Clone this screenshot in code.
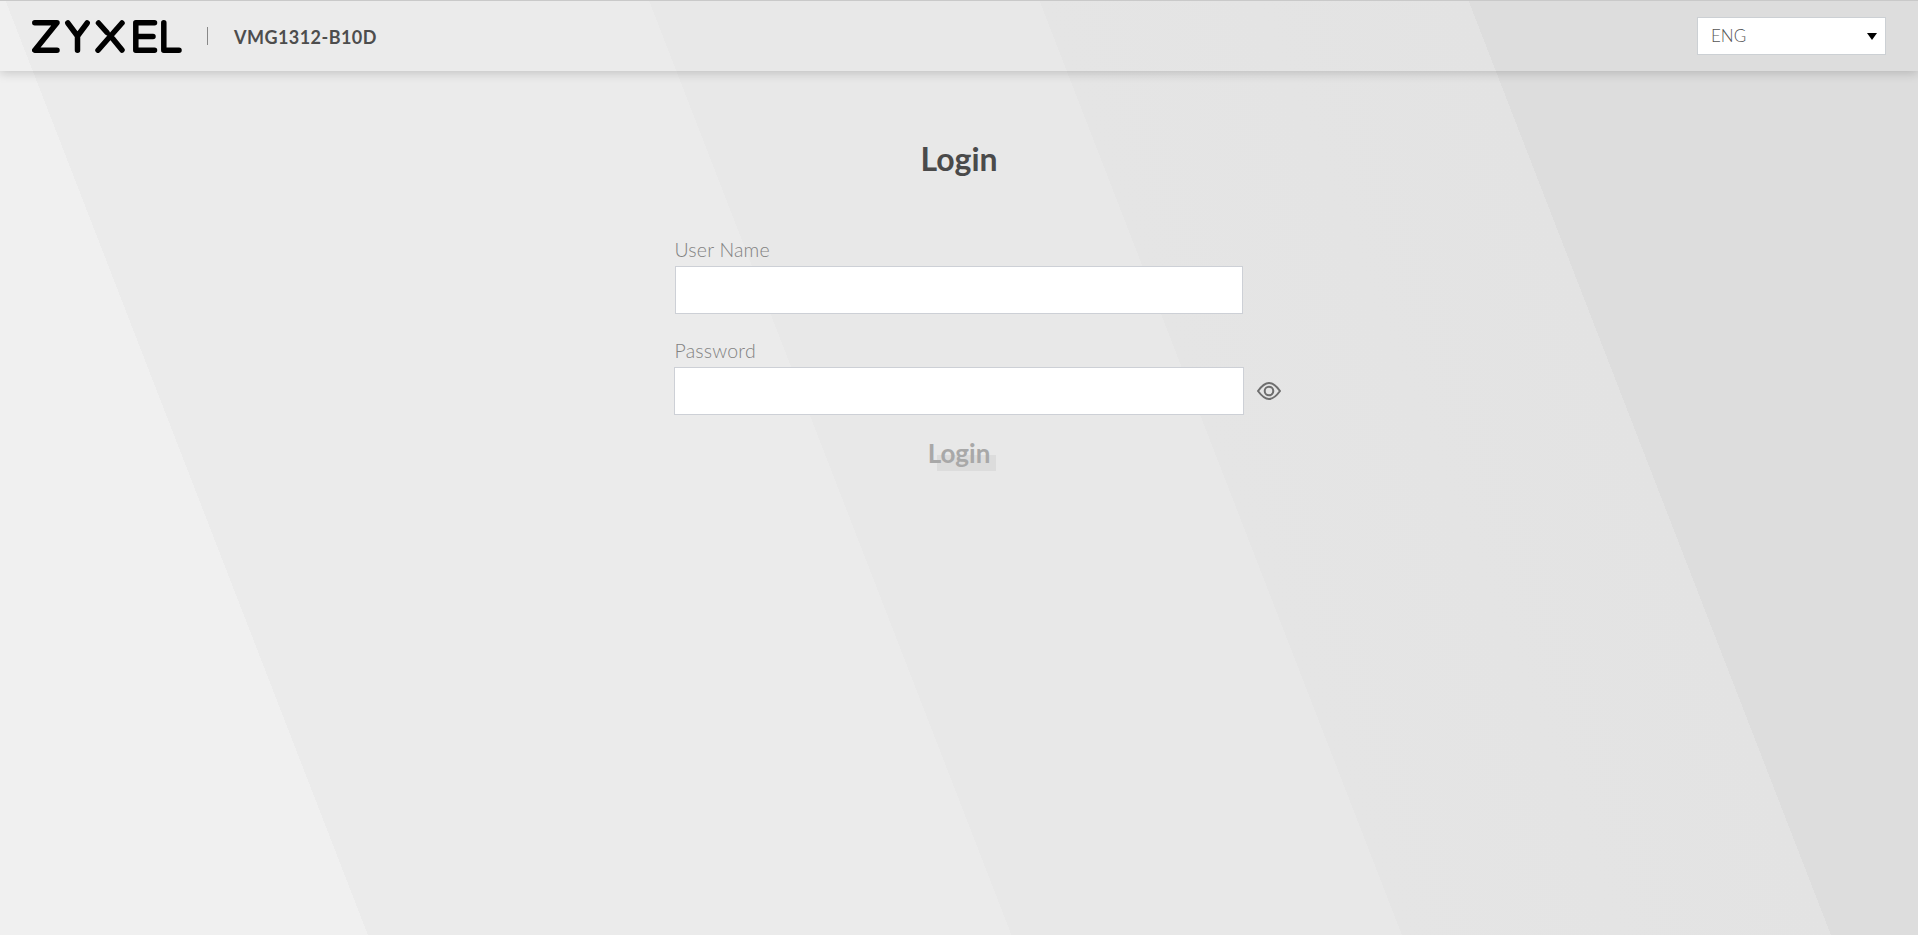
<div class="page">
  <header class="top">
    <div class="brand">
      <svg class="logo" viewBox="0 0 150 33" width="150" height="33" aria-label="Zyxel logo">
        <g fill="none" stroke="#000" stroke-width="5.500" stroke-linecap="round" stroke-linejoin="round">
          <path d="M2.800 2.800H25L2.800 30.200H25" />
          <path d="M35.800 3L45.500 16L55.200 3M45.500 16V30.200" />
          <path d="M66.500 3L75 12.500M90 3L66 30.200M81 19L90 30" />
          <path d="M122.500 2.800H103.800V30.200H122.500M103.800 16.500H121" />
          <path d="M131.800 2.800V30.200H147" />
        </g>
      </svg>
      <span class="sep"></span>
      <span class="model">VMG1312-B10D</span>
    </div>
    <div class="lang">
      <span>ENG</span>
      <i class="caret"></i>
    </div>
  </header>

  <main class="login">
    <h1>Login</h1>
    <form class="form">
      <label class="field">
        <span>User Name</span>
        <input type="text" />
      </label>
      <label class="field pw">
        <span>Password</span>
        <div class="pwrow">
          <input type="password" />
          <svg class="eye" viewBox="0 0 24 18" width="24" height="18">
            <path d="M1 9C5 3.500 8.500 1 12 1s7 2.500 11 8c-4 5.500-7.500 8-11 8S5 14.500 1 9Z" fill="none" stroke="#6e6e6e" stroke-width="2" />
            <circle cx="12" cy="9" r="4.300" fill="none" stroke="#6e6e6e" stroke-width="2" />
          </svg>
        </div>
      </label>
      <div class="btnwrap"><button type="button" class="btn">Login</button></div>
    </form>
  </main>
</div>

<style>
  :global(body) {
    margin: 0;
    background: #e8e8e8;
  }
  .page {
    height: 935px;
    overflow: hidden;
    font-family: "Lato", "Open Sans", sans-serif;
    background: linear-gradient(
      68.8deg,
      #f0f0f0 0,
      #f0f0f0 343px,
      #ebebeb 343px,
      #ebebeb 943px,
      #e8e8e8 943px,
      #e8e8e8 1307px,
      #e5e5e5 1307px,
      #e3e3e3 1707px,
      #dddddd 1707px,
      #dddddd 100%
    );
  }
  .top {
    box-sizing: border-box;
    height: 71px;
    border-top: 1px solid #c9c9c9;
    display: flex;
    align-items: center;
    justify-content: space-between;
    padding: 0 32px;
    box-shadow: 0 2px 10px rgba(0,0,0,0.18);
  }
  .brand {
    display: flex;
    align-items: center;
  }
  .logo {
    margin-top: 1px;
  }
  .sep {
    width: 1px;
    height: 18px;
    background: #888;
    margin-left: 25px;
  }
  .model {
    margin-left: 26px;
    margin-top: 2px;
    font-size: 18px;
    font-weight: 700;
    color: #4d4d4d;
    letter-spacing: 0.45px;
  }
  .lang {
    box-sizing: border-box;
    width: 189px;
    height: 38px;
    background: #fff;
    border: 1px solid #ccd0d4;
    display: flex;
    align-items: center;
    justify-content: space-between;
    padding: 0 8px 0 13px;
    font-size: 17px;
    font-weight: 300;
    color: #555;
  }
  .lang span {
    margin-top: -1px;
  }
  .caret {
    width: 0;
    height: 0;
    margin-top: 1px;
    border-left: 5px solid transparent;
    border-right: 5px solid transparent;
    border-top: 7px solid #000;
  }
  .login {
    display: flex;
    flex-direction: column;
    align-items: center;
  }
  h1 {
    margin: 0;
    padding-top: 69px;
    font-size: 32px;
    line-height: 38px;
    font-weight: 700;
    color: #4a4a4a;
    text-align: center;
  }
  .form {
    width: 569px;
    margin-top: 60px;
  }
  .field {
    display: block;
  }
  .field span {
    display: block;
    font-size: 19.500px;
    line-height: 24px;
    margin-bottom: 4px;
    font-weight: 300;
    letter-spacing: 0.2px;
    color: #828282;
  }
  input {
    display: block;
    box-sizing: border-box;
    width: 568px;
    height: 48px;
    background: #fff;
    border: 1px solid #cdd0d6;
    outline: none;
    padding: 0 10px;
  }
  .pw {
    margin-top: 25px;
  }
  .pwrow {
    position: relative;
  }
  .pwrow input {
    width: 570px;
    margin-left: -1px;
  }
  .eye {
    position: absolute;
    left: 582px;
    top: 15px;
  }
  .btnwrap {
    display: flex;
    justify-content: center;
    margin-top: 23px;
  }
  .btn {
    position: relative;
    isolation: isolate;
    border: none;
    padding: 0;
    background: none;
    font: 700 26px/30px "Lato", sans-serif;
    color: #a8a8a8;
  }
  .btn::before {
    content: "";
    position: absolute;
    z-index: -1;
    left: 9px;
    top: 17px;
    width: 59px;
    height: 16px;
    background: #dcdcdc;
  }
</style>
